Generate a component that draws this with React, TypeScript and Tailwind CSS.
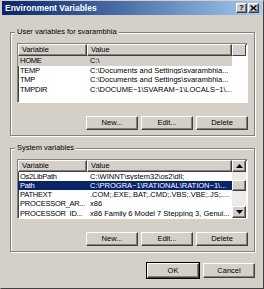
import React from "react";

type Row = { name: string; value: string; selected?: "focus" | "blur" };

const userVars: Row[] = [
  { name: "HOME", value: "C:\\", selected: "blur" },
  { name: "TEMP", value: "C:\\Documents and Settings\\svarambhia..." },
  { name: "TMP", value: "C:\\Documents and Settings\\svarambhia..." },
  { name: "TMPDIR", value: "C:\\DOCUME~1\\SVARAM~1\\LOCALS~1\\..." },
];

const systemVars: Row[] = [
  { name: "Os2LibPath", value: "C:\\WINNT\\system32\\os2\\dll;" },
  { name: "Path", value: "C:\\PROGRA~1\\RATIONAL\\RATION~1\\...", selected: "focus" },
  { name: "PATHEXT", value: ".COM;.EXE;.BAT;.CMD;.VBS;.VBE;.JS;...." },
  { name: "PROCESSOR_AR...", value: "x86" },
  { name: "PROCESSOR_ID...", value: "x86 Family 6 Model 7 Stepping 3, Genui..." },
];

const raised =
  "border border-t-white border-l-white border-r-[#404040] border-b-[#404040] shadow-[inset_-1px_-1px_0_#808080]";

const Button = ({ label, w = "w-[52px]", h = "h-[14px]", bold }: { label: string; w?: string; h?: string; bold?: boolean }) => (
  <div
    className={`${w} ${h} ${raised} ${bold ? "outline outline-1 outline-black" : ""} bg-[#d4d0c8] flex items-center justify-center text-black`}
  >
    {label}
  </div>
);

const HeaderCell = ({ label, w }: { label: string; w: string }) => (
  <div className={`${w} h-full ${raised} flex items-center pl-[3px] text-black`}>{label}</div>
);

const ScrollArrow = ({ up }: { up?: boolean }) => (
  <div className={`w-[14px] h-[12px] ${raised} bg-[#d4d0c8] flex items-center justify-center`}>
    <svg width="7" height="4" viewBox="0 0 7 4">
      <path d={up ? "M3.5 0 L7 4 L0 4 Z" : "M0 0 L7 0 L3.5 4 Z"} fill="#000" />
    </svg>
  </div>
);

const ListView = ({ rows, scroll }: { rows: Row[]; scroll?: boolean }) => (
  <div className="w-[231px] h-[60px] bg-white border border-t-[#808080] border-l-[#808080] border-r-white border-b-white shadow-[inset_1px_1px_0_#404040] flex overflow-hidden">
    <div className="flex flex-col w-[214px]">
      <div className="h-[12px] flex bg-[#d4d0c8]">
        <HeaderCell label="Variable" w="w-[69px]" />
        <HeaderCell label="Value" w="w-[145px]" />
      </div>
      {rows.map((r) => (
        <div
          key={r.name}
          className={`h-[9.5px] flex items-center ${
            r.selected === "focus"
              ? "bg-[#0a246a] text-white"
              : r.selected === "blur"
                ? "bg-[#d4d0c8] text-black"
                : "text-black"
          }`}
        >
          <div className="w-[69px] pl-[2px] whitespace-nowrap overflow-hidden tracking-[-0.25px]">{r.name}</div>
          <div className="w-[145px] pl-[3px] whitespace-nowrap overflow-hidden">{r.value}</div>
        </div>
      ))}
    </div>
    {scroll ? (
      <div className="w-[14px] flex flex-col bg-[#ecebe8]">
        <ScrollArrow up />
        <div className="h-[8px]" />
        <div className={`w-[14px] h-[11px] ${raised} bg-[#d4d0c8]`} />
        <div className="flex-1" />
        <ScrollArrow />
      </div>
    ) : (
      <div className="w-[14px] h-[12px] bg-[#d4d0c8] border border-t-white border-l-white border-r-[#404040] border-b-[#404040]" />
    )}
  </div>
);

const Group = ({ label, rows, scroll }: { label: string; rows: Row[]; scroll?: boolean }) => (
  <div className="relative w-[245px] h-[104px] border border-[#808080] shadow-[inset_1px_1px_0_#fff,1px_1px_0_#fff] flex flex-col items-center pt-[10px]">
    <span className="absolute -top-[6px] left-[4px] px-[2px] bg-[#d4d0c8] text-black leading-[10px]">{label}</span>
    <ListView rows={rows} scroll={scroll} />
    <div className="w-[231px] flex justify-end gap-[3px] mt-[13px]">
      <Button label="New..." />
      <Button label="Edit..." />
      <Button label="Delete" />
    </div>
  </div>
);

export default function App() {
  return (
    <div
      className="w-[264px] h-[289px] bg-[#d4d0c8] flex flex-col border border-t-[#d4d0c8] border-l-[#d4d0c8] border-r-[#404040] border-b-[#404040] text-[7.5px] leading-none"
      style={{ fontFamily: '"Liberation Sans", Arial, sans-serif' }}
    >
      <div className="h-[14px] mx-[1px] bg-gradient-to-r from-[#0a246a] to-[#a6caf0] flex items-center pl-[3px] pr-[3px]">
        <span className="text-white font-bold text-[8.5px]">Environment Variables</span>
        <div className="ml-auto flex gap-[1px]">
          <div className={`w-[11px] h-[10px] ${raised} bg-[#d4d0c8] flex items-center justify-center font-bold text-[8px] text-black`}>?</div>
          <div className={`w-[11px] h-[10px] ${raised} bg-[#d4d0c8] flex items-center justify-center`}>
            <svg width="7" height="6" viewBox="0 0 7 6">
              <path d="M0.5 0.5 L6.5 5.5 M6.5 0.5 L0.5 5.5" stroke="#000" strokeWidth="1.4" />
            </svg>
          </div>
        </div>
      </div>
      <div className="flex flex-col pl-[9px] pt-[17px]">
        <Group label="User variables for svarambhia" rows={userVars} />
        <div className="mt-[12px]">
          <Group label="System variables" rows={systemVars} scroll />
        </div>
        <div className="w-[245px] flex justify-end gap-[4px] mt-[11px]">
          <Button label="OK" h="h-[15px]" bold />
          <Button label="Cancel" h="h-[15px]" />
        </div>
      </div>
    </div>
  );
}
